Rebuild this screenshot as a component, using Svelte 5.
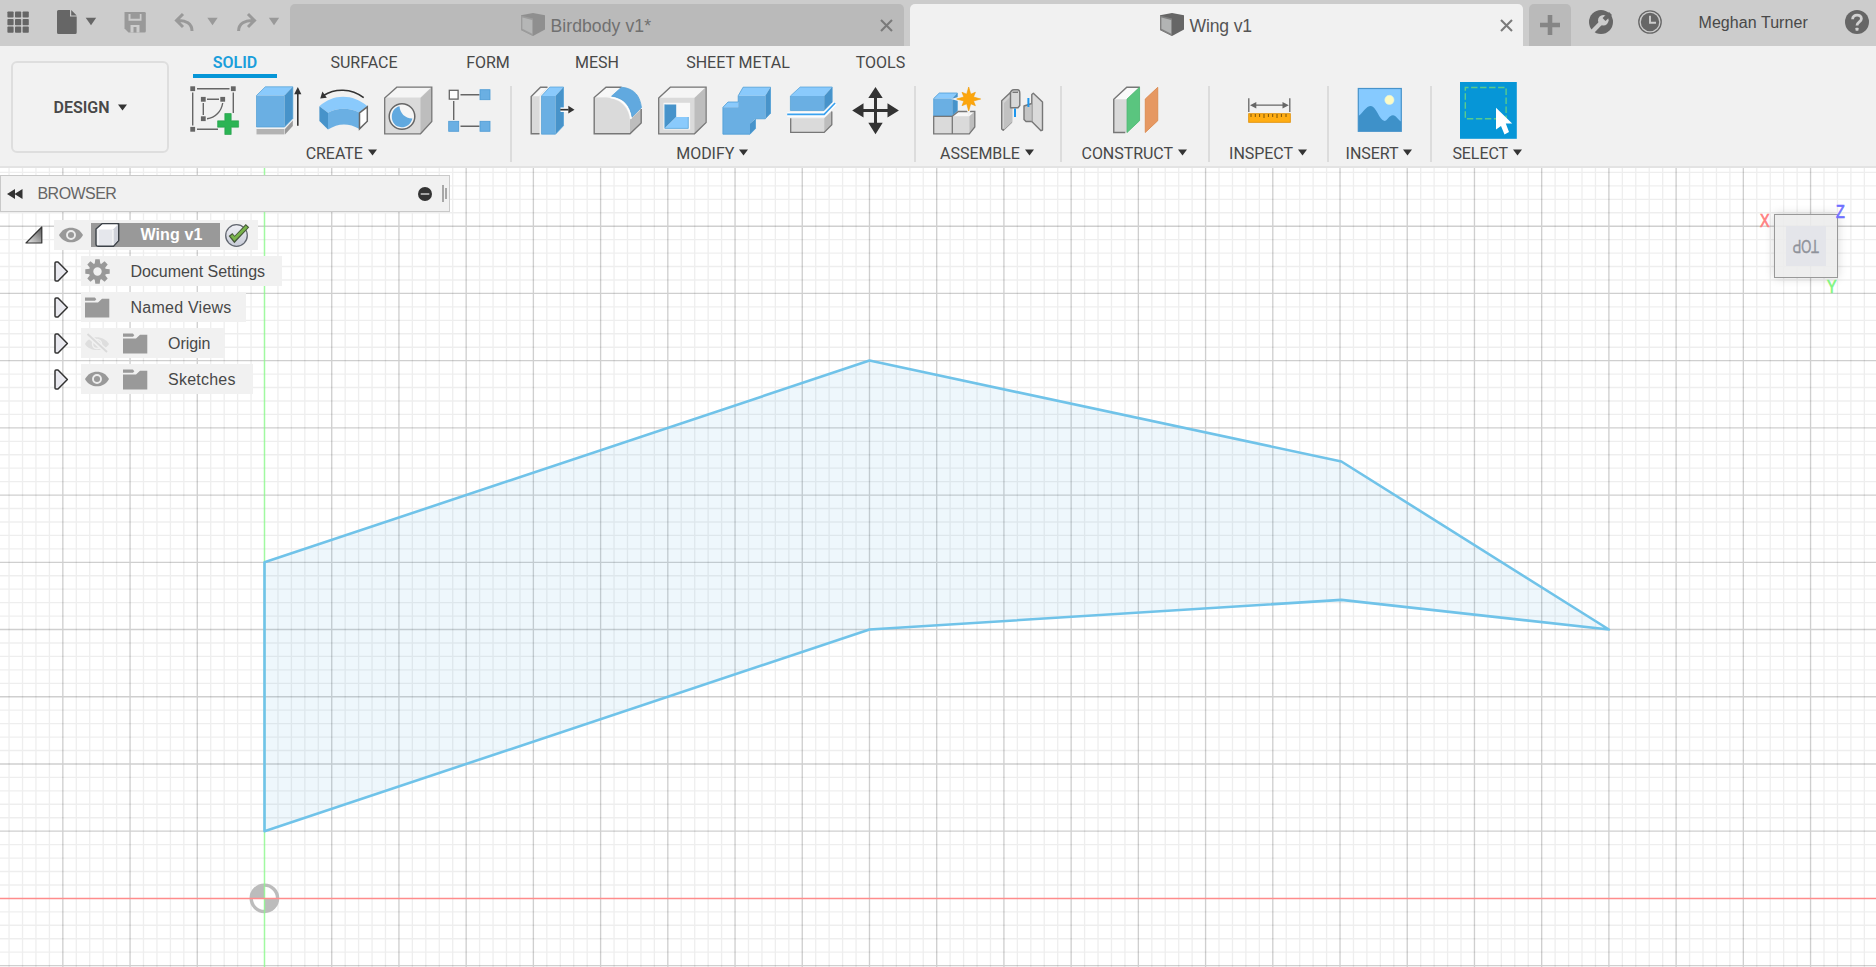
<script>
  const UNIT = 67.22;
  const OX = 264.5;
  const OY = 898.4;
  const W = 1876;
  const H = 967;

  const minorX = [];
  const majorX = [];
  for (let i = -20; i <= 120; i++) {
    const x = OX + (i * UNIT) / 5;
    if (x < 0 || x > W || i === 0) continue;
    (i % 5 === 0 ? majorX : minorX).push(x);
  }
  const minorY = [];
  const majorY = [];
  for (let i = -5; i <= 56; i++) {
    const y = OY - (i * UNIT) / 5;
    if (y < 160 || y > H || i === 0) continue;
    (i % 5 === 0 ? majorY : minorY).push(y);
  }
  const vLines = (list) => list.map((x) => `M${x.toFixed(2)} 160V${H}`).join('');
  const hLines = (list) => list.map((y) => `M0 ${y.toFixed(2)}H${W}`).join('');

  const wing = [[0, 5], [9, 8], [16.02, 6.5], [20, 4], [16.02, 4.44], [9, 4], [0, 1]]
    .map(([x, y]) => `${(OX + x * UNIT).toFixed(1)},${(OY - y * UNIT).toFixed(1)}`)
    .join(' ');

  const tabs = [
    { name: 'SOLID', width: 84, active: true },
    { name: 'SURFACE', width: 174 },
    { name: 'FORM', width: 74 },
    { name: 'MESH', width: 144 },
    { name: 'SHEET METAL', width: 138 },
    { name: 'TOOLS', width: 147 }
  ];

  // Each tool occupies one strip of the ribbon: x is its left edge, w its width.
  const groups = [
    { name: 'CREATE', width: 338.5, tools: [
      { id: 'sketch', x: 182, w: 65 }, { id: 'extrude', x: 247, w: 64 }, { id: 'revolve', x: 311, w: 65 },
      { id: 'hole', x: 376, w: 64 }, { id: 'pattern', x: 440, w: 62.5 } ] },
    { name: 'MODIFY', width: 403.5, tools: [
      { id: 'presspull', x: 519.5, w: 65 }, { id: 'fillet', x: 584.5, w: 65 }, { id: 'shell', x: 649.5, w: 65 },
      { id: 'combine', x: 714.5, w: 64 }, { id: 'split', x: 778.5, w: 65 }, { id: 'move', x: 843.5, w: 64 } ] },
    { name: 'ASSEMBLE', width: 146, tools: [
      { id: 'component', x: 924, w: 64 }, { id: 'joint', x: 988, w: 64 } ] },
    { name: 'CONSTRUCT', width: 148.5, tools: [{ id: 'plane', x: 1103.25, w: 64 }] },
    { name: 'INSPECT', width: 119, tools: [{ id: 'measure', x: 1237, w: 64 }] },
    { name: 'INSERT', width: 103, tools: [{ id: 'image', x: 1348, w: 64 }] },
    { name: 'SELECT', width: 113.5, tools: [{ id: 'select', x: 1456, w: 64 }] }
  ];

  const rows = [
    { name: 'Document Settings', icon: 'gear', width: 201 },
    { name: 'Named Views', icon: 'folder', width: 165, wide: true },
    { name: 'Origin', icon: 'folder', eye: 'off', width: 143 },
    { name: 'Sketches', icon: 'folder', eye: 'on', width: 172, wide: true }
  ];

  const star = Array.from({ length: 16 }, (_, i) => {
    const r = i % 2 ? 5.2 : i % 4 === 0 ? 12 : 9.5;
    const a = (i * Math.PI) / 8;
    return `${(968.7 + r * Math.cos(a)).toFixed(1)},${(99 + r * Math.sin(a)).toFixed(1)}`;
  }).join(' ');
</script>

{#snippet caret()}
  <svg class="caret" width="9" height="7" viewBox="0 0 9 7"><path d="M0 .5H9L4.5 6.5Z" fill="#333" /></svg>
{/snippet}

{#snippet docCube()}
  <svg width="24" height="23" viewBox="0 0 24 23">
    <path d="M0 2.2L12 0L24 2.2V16.5L12 23L0 17Z" fill="#666" />
    <path d="M0 2.4L12 5.6V23L0 17Z" fill="#808080" />
    <path d="M1.4 4.4L11.2 7V20.8L1.4 15.8Z" fill="#b2b4b4" />
  </svg>
{/snippet}

{#snippet cross()}
  <svg width="13" height="13" viewBox="0 0 13 13"><path d="M1 1L12 12M12 1L1 12" stroke="#7a7a7a" stroke-width="2.1" /></svg>
{/snippet}

{#snippet eye(state)}
  {#if state === 'on'}
    <svg width="24" height="16" viewBox="0 0 24 16">
      <path d="M0 8C5 -1.8 19 -1.8 24 8C19 17.8 5 17.8 0 8Z" fill="#999" />
      <circle cx="12" cy="8" r="4" fill="none" stroke="#ececec" stroke-width="1.9" />
    </svg>
  {:else}
    <svg width="24" height="20" viewBox="0 0 24 20">
      <path d="M0 11C4 2 19 2 24 11C19 19 5 19 0 11Z" fill="#dedede" />
      <circle cx="12" cy="11" r="4.5" fill="none" stroke="#f1f1f1" stroke-width="1.5" />
      <path d="M1 0L23 20" stroke="#f1f1f1" stroke-width="5" />
      <path d="M2.5 1L22 19" stroke="#dadada" stroke-width="1.9" />
    </svg>
  {/if}
{/snippet}

{#snippet tool(id)}
  {#if id === 'sketch'}
    <path d="M197 88.7H229.5M192.7 92.5V125.5M233.3 92.5V113M197 129.3H218M207 99.3H219M203.3 103V115M222.7 103C221.5 111 215.5 118 207 118.7" fill="none" stroke="#666" stroke-width="1.4" />
    {#each [[192.7, 88.7], [233.3, 88.7], [192.7, 129.3], [203.3, 99.3], [222.7, 99.3], [203.3, 118.7]] as [cx, cy]}
      <rect x={cx - 2.4} y={cy - 2.4} width="4.8" height="4.8" fill="#666" />
    {/each}
    <path d="M224.8 113.5H231.2V120.8H238.6V127.2H231.2V134.5H224.8V127.2H217.6V120.8H224.8Z" fill="#2bb454" stroke="#219c46" stroke-width=".6" />
  {:else if id === 'extrude'}
    <path d="M256.5 95.5L265.3 86.8H292.8L284.5 95.5Z" fill="#8acafc" />
    <path d="M256.5 95.5H284.5V127H256.5Z" fill="#6aafe3" />
    <path d="M284.5 95.5L292.8 86.8V118.5L284.5 127Z" fill="#4793ca" />
    <path d="M256.5 95.5L265.3 86.8H292.8V118.5L284.5 127H256.5Z" fill="none" stroke="#4d9dd6" stroke-width=".7" />
    <path d="M256.5 129H284.5V134.4H256.5Z" fill="#b3b3b3" /><path d="M285 129L292.8 120.5V126L285 134.4Z" fill="#999" />
    <path d="M297.8 93V125.7" stroke="#333" stroke-width="1.6" /><path d="M297.8 87L301.4 94.3H294.2Z" fill="#333" />
  {:else if id === 'revolve'}
    <path d="M319.4 106.3C333 93.5 353 93.5 367.5 106.3L359 112.5C350 107.6 337 107.6 328 112.8Z" fill="#8acafc" />
    <path d="M319.4 106.3L328 112.8V129.6L319.4 121Z" fill="#4793ca" />
    <path d="M328 112.8C337 107.6 350 107.6 359 112.5V128.8C349 122.8 338 122.8 328 129.6Z" fill="#6aafe3" />
    <path d="M359.5 112.8L367.3 106.8V121.3L359.5 128.9Z" fill="#fff" stroke="#666" stroke-width="1.5" />
    <path d="M363.7 97.6C351 88 335 88.2 323.5 95.5" fill="none" stroke="#333" stroke-width="1.5" /><path d="M320.2 98.4L322.4 91.6L326.8 97.7Z" fill="#333" />
  {:else if id === 'hole'}
    <path d="M384.7 98L396.8 87.2H431.8V121.4L420.5 133.8H384.7Z" fill="#dadada" />
    <path d="M385.5 97.6L397 87.6H431L420.5 97.6Z" fill="#f5f5f5" /><path d="M420.5 98L431.5 87.4V121.2L420.5 133.6Z" fill="#bdbdbd" />
    <path d="M384.7 98L396.8 87.2H431.8V121.4L420.5 133.8H384.7Z" fill="none" stroke="#777" stroke-width="1.3" />
    <circle cx="402" cy="116.5" r="12.8" fill="#f5f5f5" stroke="#666" stroke-width="1.5" />
    <path d="M399.5 106.2C400 113 405 118.5 412.4 118.4C410.6 124.5 406.5 127.2 401.5 127.2C395 127 391.8 122 391.8 116.8C391.8 111.5 394.5 107.5 399.5 106.2Z" fill="#61a9df" />
  {:else if id === 'pattern'}
    <path d="M460.5 94.7H479.5M453.7 101V120M460.5 126.3H479.5" stroke="#666" stroke-width="1.4" />
    <rect x="449.3" y="90.3" width="8.8" height="8.8" fill="#fff" stroke="#666" stroke-width="1.3" />
    {#each [[485, 94.7], [453.7, 126.3], [485, 126.3]] as [cx, cy]}
      <rect x={cx - 5} y={cy - 5} width="10" height="10" fill="#6aafe3" stroke="#4d9bd4" stroke-width=".8" />
    {/each}
  {:else if id === 'presspull'}
    <path d="M531.7 96.6L541 87.3H548L540 96V133.8H531.7Z" fill="#dadada" /><path d="M532.5 96.3L541.3 88H547L539.5 96.3Z" fill="#f7f7f7" />
    <path d="M548 87.3H541L531.7 96.6V133.8H540" fill="none" stroke="#777" stroke-width="1.4" />
    <path d="M542 96L550.3 87H564L556 96Z" fill="#8acafc" /><path d="M542 96H556V134.2H542Z" fill="#6aafe3" /><path d="M556 96L564 87V125.7L556 134.2Z" fill="#4793ca" />
    <path d="M542 96L550.3 87H564V125.7L556 134.2H542Z" fill="none" stroke="#4d9dd6" stroke-width=".7" />
    <path d="M561 109.7H570" stroke="#fff" stroke-width="4.5" /><path d="M560.8 109.7H569" stroke="#333" stroke-width="1.7" /><path d="M568.8 105.8L575 109.7L568.8 113.6Z" fill="#333" />
  {:else if id === 'fillet'}
    <path d="M594.7 97.5L606.5 87.3H622L612 96.5Z" fill="#f7f7f7" /><path d="M594.7 97.5H604C621 97.5 630.5 108 630.5 123V133.8H594.7Z" fill="#dadada" />
    <path d="M630.5 119.5L641.7 109V123L630.5 133.8Z" fill="#bdbdbd" />
    <path d="M622 87.3H606.5L594.7 97.5V133.8H630.5L641.7 123V109" fill="none" stroke="#777" stroke-width="1.4" />
    <path d="M612 96.2L622 87.2C636 88.5 640.5 97 642 107.6L632.5 117C630.5 106 625 98 612 96.2Z" fill="#61a9df" stroke="#4d9dd6" stroke-width=".7" />
    <path d="M611 97.5C624 99 630 107 631.6 119" fill="none" stroke="#fff" stroke-width="1.3" />
  {:else if id === 'shell'}
    <path d="M659.2 98L670.8 87.2H706.6V122.4L695 133.8H659.2Z" fill="#dadada" /><path d="M660 97.8L671 87.8H706L695 97.8Z" fill="#f5f5f5" /><path d="M695 98L706 87.5V122L695 133.5Z" fill="#bdbdbd" />
    <path d="M659.2 98L670.8 87.2H706.6V122.4L695 133.8H659.2Z" fill="none" stroke="#777" stroke-width="1.3" />
    <path d="M664 102.8H690.6V129.5H664Z" fill="#f8f8f8" /><path d="M665.3 104.4H676.7V117L665.3 128.2Z" fill="#4793ca" /><path d="M676.7 117H688.8V128.4H665.3Z" fill="#8acafc" />
    <path d="M665.3 104.4V128.4H688.8V117" fill="none" stroke="#4d9dd6" stroke-width=".7" />
  {:else if id === 'combine'}
    <path d="M738.7 95.8L743.6 87.2H771L765.8 95.8Z" fill="#8acafc" /><path d="M765.8 95.8L771 87.2V113.2L765.8 118.8Z" fill="#4793ca" />
    <path d="M723.4 107.3L728.5 102H738.7V107.3Z" fill="#8acafc" /><path d="M750.5 123.5L756 118.8V128.6L750.5 134.2Z" fill="#4793ca" />
    <path d="M738.7 95.8H765.8V118.8H756L750.5 123.5V134.2H723.4V107.3H738.7Z" fill="#6aafe3" />
    <path d="M738.7 95.8L743.6 87.2H771V113.2L765.8 118.8H756V128.6L750.5 134.2H723.4V107.3L728.5 102H738.7Z" fill="none" stroke="#4d9dd6" stroke-width=".8" />
  {:else if id === 'split'}
    <path d="M790.9 96L800.7 87H832.7L824.7 96Z" fill="#8acafc" /><path d="M790.9 96H824.7V110.5H790.9Z" fill="#6aafe3" /><path d="M824.7 96L832.7 87V102.3L824.7 110.5Z" fill="#4793ca" />
    <path d="M790.9 96L800.7 87H832.7V102.3L824.7 110.5H790.9Z" fill="none" stroke="#4d9dd6" stroke-width=".7" />
    <path d="M787.7 114.4H824.7L835.6 103" fill="none" stroke="#fff" stroke-width="4.5" /><path d="M787.7 114.4H824.7L835.6 103" fill="none" stroke="#3ba2ef" stroke-width="1.7" />
    <path d="M791.2 118.3H824.7V132.4H791.2Z" fill="#dadada" /><path d="M824.7 118.3L832.3 111V124.8L824.7 132.4Z" fill="#bdbdbd" /><path d="M791.2 118.3V132.4H824.7L832.3 124.8V111.5" fill="none" stroke="#777" stroke-width="1.3" />
  {:else if id === 'move'}
    <path d="M876 94V127M860 110.4H892" stroke="#333" stroke-width="3" />
    <path d="M876 87L883.2 98H868.8ZM876 134.2L883.2 122.8H868.8ZM852.7 110.4L864 103.2V117.6ZM899.4 110.4L888 103.2V117.6Z" fill="#333" />
  {:else if id === 'component'}
    <path d="M933.7 98.5L939.3 93H957.3L952.3 98.5Z" fill="#8acafc" /><path d="M933.7 98.5H952.3V116H933.7Z" fill="#6aafe3" /><path d="M952.3 98.5L957.3 93V110.7L952.3 116Z" fill="#4793ca" />
    <path d="M933.7 98.5L939.3 93H957.3V110.7L952.3 116H933.7Z" fill="none" stroke="#4d9dd6" stroke-width=".8" />
    <path d="M952.3 116.3L958.3 111.5H974.8L969.3 116.3Z" fill="#f7f7f7" /><path d="M933.7 116.3H969.3V133.8H933.7Z" fill="#dadada" /><path d="M969.3 116.3L974.8 111.5V127L969.3 133.8Z" fill="#bdbdbd" />
    <path d="M952.3 116.3H933.7V133.8H969.3L974.8 127V111.5H958.3L952.3 116.3V133.8" fill="none" stroke="#777" stroke-width="1.3" />
    <polygon points={star} fill="#fca50c" stroke="#f0f0f0" stroke-width="3" /><polygon points={star} fill="#fca50c" stroke="#f29b00" stroke-width=".6" />
  {:else if id === 'joint'}
    <g stroke="#777" stroke-width="1.4" stroke-linejoin="round">
      <path d="M1001.7 100.7L1011.5 91.5V122.3L1003.2 130.3L1001.7 129Z" fill="#d4d4d4" /><path d="M1004 103L1012 95V122.3L1004 129.8Z" fill="#c1c1c1" stroke="none" />
      <path d="M1010 94.5C1010.5 91.5 1012.2 89.8 1014 89.8H1017.5C1019 89.8 1019.8 91 1019.8 93.5V105.5L1018 107.7H1010.5V92.5" fill="#d8d8d8" />
      <path d="M1012.5 92.3H1018" fill="none" />
      <path d="M1031.8 94.5L1033.3 93.3L1042.5 102V130L1041 130.7L1031.8 121.5Z" fill="#dadada" />
      <path d="M1031.8 103.5L1024 106V119.5L1026 121.5H1031.8" fill="#c5c5c5" />
    </g>
    <path d="M1015 108.5V117M1028.4 98V107" stroke="#1d96ed" stroke-width="2" />
  {:else if id === 'plane'}
    <path d="M1114 99.3L1127 87.3H1140L1127.3 99.3V132.6H1114Z" fill="#d9d9d9" /><path d="M1114.5 99.3L1127.2 88H1138.5L1127 99.3Z" fill="#fafafa" />
    <path d="M1140 87.3H1127L1114 99.3V132.5H1125.5" fill="none" stroke="#777" stroke-width="1.4" />
    <path d="M1127.3 99L1139.8 87.3V120.7L1127.3 132.5Z" fill="#5ac57f" stroke="#46b66d" stroke-width=".8" /><path d="M1145.5 99L1158 87.3V120.7L1145.5 132.5Z" fill="#e69862" stroke="#d98548" stroke-width=".8" />
  {:else if id === 'measure'}
    <path d="M1248.8 98.3V112M1289.8 98.3V112M1254 105.2H1285" stroke="#666" stroke-width="1.3" /><path d="M1250 105.2L1256.3 102V108.4ZM1288.8 105.2L1282.5 102V108.4Z" fill="#666" />
    <rect x="1248.7" y="113.7" width="41.6" height="8.6" fill="#ffad13" stroke="#e09108" stroke-width=".9" />
    <path d="M1251 114V117M1255.3 114V117M1259.6 114V117M1264 114V118M1268.4 114V117M1272.7 114V117M1277 114V118M1281.4 114V117M1286 114V117" stroke="#7d540b" stroke-width="1" />
  {:else if id === 'image'}
    <rect x="1358.3" y="88.5" width="43" height="42.8" fill="#86caff" stroke="#4793ca" stroke-width="1.2" />
    <path d="M1358.5 116C1364 112 1366 105.8 1371 106C1376.5 106.5 1379 120 1384.5 121C1387 121 1389 115.2 1393 115.2C1396 115.2 1398 119.5 1401 121.5V131H1358.5Z" fill="#3e91c9" /><circle cx="1389.4" cy="99.9" r="4.6" fill="#fcfbc5" stroke="#dff2e1" stroke-width=".6" />
  {:else}
    <rect x="1460" y="82" width="56.8" height="56.8" fill="#0696d7" /><rect x="1465.3" y="87.5" width="40.8" height="31.2" fill="none" stroke="#59cb8c" stroke-width="1.4" stroke-dasharray="6.4 2.6" stroke-dashoffset="3.2" />
    <path d="M1496 107.8L1512.2 123.4H1505.8L1509 132L1504.5 134.4L1501 126L1496 129.5Z" fill="#fff" />
  {/if}
{/snippet}

<div class="app">
  <header class="titlebar">
    <div class="quick">
      <svg width="46" height="46" viewBox="0 0 46 46"><g fill="#666">
        {#each [0, 1, 2] as r}{#each [0, 1, 2] as c}<rect x={7.4 + c * 7.6} y={11.4 + r * 7.6} width="6.2" height="6.2" rx=".8" />{/each}{/each}
      </g></svg>
      <svg width="58" height="46" viewBox="46 0 58 46"><path d="M58.5 10H70V16.5H76.7V32.5Q76.7 34 75.2 34H58.5Q57 34 57 32.5V11.5Q57 10 58.5 10ZM71.2 10L76.7 15.4H71.2Z" fill="#666" /><path d="M85.7 17.8H96.2L91 25.2Z" fill="#666" /></svg>
      <svg width="54" height="46" viewBox="104 0 54 46"><path d="M124.5 12.5Q124.5 12 125.5 12H144.5Q145.8 12 145.8 13.3V31Q145.8 32.5 144.5 32.5H128.5L124.5 28.5Z" fill="#999" /><path d="M128.5 14H141.5V20.8H128.5ZM130.5 25H139.5V32.5H130.5Z" fill="#ccc" /><path d="M130.5 14H139.8V18.8H130.5ZM133.5 27H136.5V32.5H133.5Z" fill="#999" /></svg>
      <svg width="70" height="46" viewBox="158 0 70 46"><path d="M183 14L176.5 20.5L183 27M177 20.5C186 19.8 192 23.5 192 31" fill="none" stroke="#999" stroke-width="3" /><path d="M207.3 17.8H217.7L212.5 25.2Z" fill="#999" /></svg>
      <svg width="62" height="46" viewBox="228 0 62 46"><path d="M248 14L254.5 20.5L248 27M254 20.5C245 19.8 238.6 23.5 238.6 31" fill="none" stroke="#999" stroke-width="3" /><path d="M268.8 17.8H279.2L274 25.2Z" fill="#999" /></svg>
    </div>
    <div class="doc dim"><span class="doclabel"><span class="faded">{@render docCube()}</span>Birdbody v1*</span>{@render cross()}</div>
    <div class="doc current"><span class="doclabel">{@render docCube()}Wing v1</span>{@render cross()}</div>
    <div class="newdoc"><svg width="20" height="20" viewBox="0 0 20 20"><path d="M10 0V20M0 10H20" stroke="#858585" stroke-width="4.6" /></svg></div>
    <div class="account">
      <svg width="24" height="24" viewBox="0 0 24 24"><circle cx="12" cy="12" r="12" fill="#666" /><path d="M2.5 22.5L12.5 12.2" stroke="#ccc" stroke-width="4.2" /><circle cx="14.3" cy="10.3" r="5.3" fill="#ccc" /><path d="M21.5 3.4L15 9.6" stroke="#666" stroke-width="4.2" /></svg>
      <svg class="clock" width="24" height="24" viewBox="0 0 24 24"><circle cx="12" cy="12" r="11.2" fill="none" stroke="#666" stroke-width="1.3" /><circle cx="12" cy="12" r="9.2" fill="#666" /><path d="M12 5.7V12.8H18" fill="none" stroke="#ccc" stroke-width="1.9" /></svg>
      <span class="user">Meghan Turner</span>
      <svg width="24" height="24" viewBox="0 0 24 24"><circle cx="12" cy="12" r="12" fill="#666" /><path d="M7.6 9.2C7.6 3.7 16.5 3.8 16.4 8.7C16.4 12 12 11.8 12 15.6" fill="none" stroke="#d1d1d1" stroke-width="2.8" /><rect x="10.5" y="17.7" width="3" height="3" rx=".6" fill="#d1d1d1" /></svg>
    </div>
  </header>

  <section class="ribbon">
    <button class="workspace">DESIGN {@render caret()}</button>
    <div class="panel">
      <nav>
        {#each tabs as tab}<div class="tab" class:active={tab.active} style:width="{tab.width}px">{tab.name}</div>{/each}
      </nav>
      <div class="groups">
        {#each groups as group}
          <div class="group" style:width="{group.width}px">
            <div class="tools">
              {#each group.tools as t}
                <svg width={t.w} height="60" viewBox="{t.x} 81 {t.w} 60">{@render tool(t.id)}</svg>
              {/each}
            </div>
            <div class="grouplabel">{group.name}{@render caret()}</div>
          </div>
        {/each}
      </div>
    </div>
  </section>

  <main>
    <svg class="canvas" width="1876" height="799" viewBox="0 168 1876 799">
      <path d={vLines(minorX) + hLines(minorY)} stroke="#000" stroke-opacity=".067" stroke-width="1.35" />
      <path d={vLines(majorX) + hLines(majorY)} stroke="#000" stroke-opacity=".19" stroke-width="1.35" />
      <circle cx="264.4" cy="898.3" r="13.2" fill="#fff" stroke="#bcbcbc" stroke-width="3.4" />
      <path d="M264.4 898.3V885A13.3 13.3 0 0 0 251.1 898.3ZM264.4 898.3V911.6A13.3 13.3 0 0 0 277.7 898.3Z" fill="#bcbcbc" />
      <path d="M264.5 160V967" stroke="#89f789" stroke-opacity=".8" stroke-width="1.5" />
      <path d="M0 898.5H1876" stroke="#ff8c8c" stroke-width="1.5" />
      <polygon points={wing} fill="#3aa5dc" fill-opacity=".085" stroke="#70c3e9" stroke-width="2.6" stroke-linejoin="round" />
    </svg>

    <div class="viewcube">
      <span class="axis x">X</span><span class="axis z">Z</span><span class="axis y">Y</span>
      <div class="face"><span class="plate"><span class="facename">TOP</span></span></div>
    </div>

    <aside>
      <div class="browserhead">
        <svg width="16" height="10" viewBox="0 0 16 10"><path d="M8 0V10L0 5ZM15.5 0V10L7.5 5Z" fill="#333" /></svg>
        <span>BROWSER</span>
        <svg class="minus" width="14" height="14" viewBox="0 0 14 14"><circle cx="7" cy="7" r="7" fill="#333" /><path d="M2.7 7H11.3" stroke="#ccc" stroke-width="1.5" /></svg>
        <svg class="grip" width="5" height="17" viewBox="0 0 5 17"><path d="M1 0V17M4 3V14" stroke="#777" stroke-width="1.2" /></svg>
      </div>
      <div class="row root">
        <svg width="18" height="18" viewBox="0 0 18 18"><defs><linearGradient id="open" x1="0" y1="1" x2="1" y2="0"><stop offset="0" stop-color="#eee" /><stop offset="1" stop-color="#555" /></linearGradient><linearGradient id="badge" x1="0" y1="0" x2="0" y2="1"><stop offset="0" stop-color="#f0f1f6" /><stop offset="1" stop-color="#c6cad6" /></linearGradient></defs><path d="M1 17L16.8 1V17Z" fill="url(#open)" stroke="#333" stroke-width="1.2" stroke-linejoin="round" /></svg>
        <div class="rootitem">
          {@render eye('on')}
          <span class="rootname">
            <svg width="26" height="24" viewBox="0 0 26 24"><path d="M1 6L7 .8H23.7V17.5L18.5 23.2H3Q1 23.2 1 21Z" fill="#e5e7ec" stroke="#3c4248" stroke-width="1.4" stroke-linejoin="round" /><path d="M2 6.5L7.5 1.6H22.5L18 6.5Z" fill="#fff" /><path d="M18.2 6.5L23 2V17L18.2 22.4Z" fill="#cfd2da" /><path d="M18 7V22M3 7V22" stroke="#fff" stroke-width="1" /></svg>
            <b>Wing v1</b>
          </span>
          <svg width="25" height="24" viewBox="0 0 25 24"><circle cx="11.5" cy="12.5" r="10.8" fill="url(#badge)" stroke="#626770" stroke-width="1.3" /><path d="M5.5 11.5L9.5 16.5L22.5 2.7" fill="none" stroke="#46583a" stroke-width="4.8" /><path d="M6.4 12.3L9.5 16L21.8 3.4" fill="none" stroke="#79b44b" stroke-width="2.8" /></svg>
        </div>
      </div>
      {#each rows as row}
        <div class="row child">
          <svg width="15" height="21" viewBox="0 0 15 21"><path d="M1 2Q1 1 2 1H4L13.4 10.5L4 20H2Q1 20 1 19Z" fill="#e9e9ef" stroke="#333" stroke-width="1.5" stroke-linejoin="round" /></svg>
          <div class="item" style:width="{row.width}px">
            {#if row.eye}<span class="slot">{@render eye(row.eye)}</span>{/if}
            <span class="slot">
              {#if row.icon === 'gear'}
                <svg width="25" height="25" viewBox="-12.5 -12.5 25 25"><g fill="#999">{#each [0, 45, 90, 135, 180, 225, 270, 315] as a}<path d="M-2.8 -7.5L-2.2 -12.2H2.2L2.8 -7.5Z" transform="rotate({a})" />{/each}</g><circle r="6.4" fill="none" stroke="#999" stroke-width="4.4" /></svg>
              {:else}
                <svg width="25" height="21" viewBox="0 0 25 21"><path d="M0 5.5H13L17 1.8H24.3V20.5H0Z" fill="#999" /><path d="M0 .6H9.8L11.3 2.2L10 3.7H0Z" fill="#999" /></svg>
              {/if}
            </span>
            <span class="name" class:wide={row.wide}>{row.name}</span>
          </div>
        </div>
      {/each}
    </aside>
  </main>
</div>

<style>
  :global(body) { margin: 0; background: #fff; }
  .app { width: 1876px; height: 967px; overflow: hidden; display: flex; flex-direction: column; font-family: "Liberation Sans", Arial, sans-serif; color: #484848; font-size: 16px; }
  svg { display: block; flex: none; }
  .titlebar { height: 46px; background: #ccc; display: flex; flex: none; }
  .quick { display: flex; width: 290px; }
  .doc, .newdoc { height: 42px; margin-top: 4px; border-radius: 5px 5px 0 0; display: flex; align-items: center; box-sizing: border-box; }
  .doc { width: 613.5px; padding-right: 10.5px; margin-right: 6px; font-size: 17.6px; }
  .dim { background: #bababa; color: #707070; }
  .current { background: #f1f1f1; color: #555; }
  .doclabel { display: flex; align-items: center; justify-content: center; gap: 5.5px; flex: 1; white-space: nowrap; line-height: 20px; height: 20px; margin-top: 2px; letter-spacing: .08px; }
  .dim .doclabel { padding-left: 2px; }
  .current .doclabel { padding-left: 3px; letter-spacing: -.15px; }
  .doclabel svg { margin-top: -4px; }
  .faded { opacity: .5; }
  .newdoc { width: 42px; background: #bababa; justify-content: center; }
  .account { flex: 1; display: flex; align-items: center; padding: 0 7px 2px 18px; }
  .clock { margin-left: 25px; }
  .user { margin-left: 36.5px; flex: 1; white-space: nowrap; line-height: 20px; padding-top: 1px; letter-spacing: .06px; }

  .ribbon { height: 122px; flex: none; display: flex; background: #f1f1f1; border-bottom: 2px solid #e3e3e3; box-sizing: border-box; font-family: Roboto, Arial, sans-serif; }
  .workspace { width: 158px; height: 92px; margin: 15px 4px 0 11px; padding: 0; border: 2px solid #dedede; border-radius: 6px; background: #f2f2f2; font: 600 16px Roboto, Arial, sans-serif; color: #484848; display: flex; align-items: center; justify-content: center; gap: 8px; flex: none; box-sizing: border-box; }
  .panel { flex: 1; display: flex; flex-direction: column; }
  nav { display: flex; height: 33px; padding-left: 20px; }
  .tab { text-align: center; line-height: 34px; height: 32px; box-sizing: border-box; white-space: nowrap; }
  .active { color: #1a9edb; font-weight: 600; border-bottom: 4.5px solid #0696d7; }
  .groups { display: flex; margin-top: 2px; }
  .group { height: 84px; position: relative; box-sizing: border-box; flex: none; display: flex; flex-direction: column; }
  .group:not(:last-child)::after { content: ""; position: absolute; right: -.5px; top: 5px; height: 76px; width: 2px; background: #dcdcdc; }
  .tools { display: flex; justify-content: center; }
  .grouplabel { display: flex; justify-content: center; align-items: center; gap: 5px; line-height: 20px; margin-top: 3px; margin-left: -2px; letter-spacing: -.05px; }
  .grouplabel .caret { margin-top: -3px; }

  main { position: relative; height: 799px; flex: none; }
  .canvas { position: absolute; inset: 0; }
  aside { position: absolute; left: 0; top: 7px; width: 450px; }
  .browserhead { height: 37px; border: 1.5px solid #c9c9c9; background: #f1f1f1; box-sizing: border-box; display: flex; align-items: center; padding: 0 2px 0 6px; color: #666; letter-spacing: -.55px; }
  .browserhead span { margin-left: 14.5px; flex: 1; }
  .minus { margin-right: 10px; }
  .row { display: flex; align-items: center; height: 30px; margin-bottom: 6px; }
  .root { margin-top: 8px; padding-left: 24.5px; }
  .rootitem { margin-left: 11.5px; width: 204px; height: 30px; display: flex; align-items: center; gap: 5px; padding-left: 5px; box-sizing: border-box; background: #f1f1f1; }
  .rootname { height: 24px; width: 129px; margin-left: 3px; background: #999; color: #fff; display: flex; align-items: center; padding-left: 4px; box-sizing: border-box; }
  .rootname b { margin-left: 19.5px; white-space: nowrap; letter-spacing: .1px; }
  .child { padding-left: 53.5px; }
  .item { height: 30px; background: #f1f1f1; margin-left: 12.5px; padding-left: 4px; display: flex; align-items: center; box-sizing: border-box; }
  .slot { width: 25px; margin-right: 12.5px; flex: none; }
  .name { margin-left: 8px; white-space: nowrap; padding-top: 1px; letter-spacing: -.04px; }
  .wide { letter-spacing: .24px; }

  .viewcube { position: absolute; left: 1774px; top: 46px; width: 64px; height: 64px; }
  .face { width: 64px; height: 64px; box-sizing: border-box; border: 1.5px solid #999; background: rgba(236, 236, 236, .88); box-shadow: 0 0 9px rgba(0, 0, 0, .16); display: flex; align-items: center; justify-content: center; }
  .plate { width: 40px; height: 40px; background: #e4e5ea; display: flex; align-items: center; justify-content: center; }
  .facename { transform: translateY(-1px) rotate(180deg) scaleX(.74); font-size: 17.5px; color: #8f929a; -webkit-text-stroke: .4px; }
  .axis { position: absolute; font-size: 17.5px; line-height: 18px; transform: scaleX(.82); -webkit-text-stroke: .7px; }
  .x { left: -15.5px; top: -2px; color: #ff8080; }
  .z { left: 61px; top: -11px; color: #7070ff; }
  .y { left: 52px; top: 63.5px; color: #80f580; }
</style>
